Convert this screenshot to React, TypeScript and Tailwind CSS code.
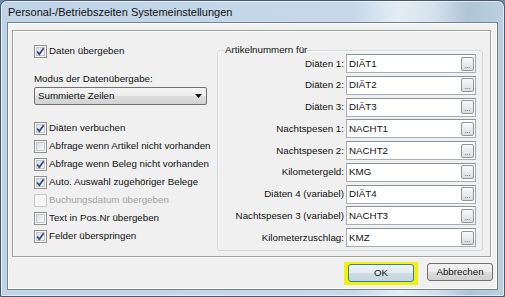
import React from "react";

const leftOptions = [
  { label: "Diäten verbuchen", checked: true },
  { label: "Abfrage wenn Artikel nicht vorhanden", checked: false },
  { label: "Abfrage wenn Beleg nicht vorhanden", checked: true },
  { label: "Auto. Auswahl zugehöriger Belege", checked: true },
  { label: "Buchungsdatum übergeben", checked: false, disabled: true },
  { label: "Text in Pos.Nr übergeben", checked: false },
  { label: "Felder überspringen", checked: true },
];

const articleRows = [
  { label: "Diäten 1:", value: "DIÄT1" },
  { label: "Diäten 2:", value: "DIÄT2" },
  { label: "Diäten 3:", value: "DIÄT3" },
  { label: "Nachtspesen 1:", value: "NACHT1" },
  { label: "Nachtspesen 2:", value: "NACHT2" },
  { label: "Kilometergeld:", value: "KMG" },
  { label: "Diäten 4 (variabel)", value: "DIÄT4" },
  { label: "Nachtspesen 3 (variabel)", value: "NACHT3" },
  { label: "Kilometerzuschlag:", value: "KMZ" },
];

function CheckBox({ checked, disabled }: { checked?: boolean; disabled?: boolean }) {
  return (
    <span
      className={`relative flex h-[13px] w-[13px] shrink-0 items-center justify-center border ${
        disabled ? "border-[#c9c9c9] bg-[#f6f6f6]" : "border-[#8e8f8f] bg-white"
      }`}
    >
      {!disabled && (
        <span className="h-[9px] w-[9px] border border-[#c2c6cc] bg-gradient-to-br from-[#d9dde2] to-[#fbfbfb]" />
      )}
      {checked && (
        <svg className="absolute left-0 top-0" width="11" height="11" viewBox="0 0 11 11">
          <path d="M2.2 5.6 L4.3 8.3 L8.6 2.2" fill="none" stroke="#2a4a8a" strokeWidth="1.7" />
        </svg>
      )}
    </span>
  );
}

function OptionRow({ label, checked, disabled }: { label: string; checked?: boolean; disabled?: boolean }) {
  return (
    <div className="flex h-[18px] items-center">
      <CheckBox checked={checked} disabled={disabled} />
      <span className={`ml-[2px] whitespace-nowrap ${disabled ? "text-[#a3a3a3]" : "text-[#111]"}`}>{label}</span>
    </div>
  );
}

function ArticleField({ label, value }: { label: string; value: string }) {
  return (
    <div className="flex h-[19px] items-center">
      <span className="w-[126px] whitespace-nowrap text-right text-[#111]">{label}</span>
      <div className="ml-[2px] flex h-[19px] w-[130px] items-center border border-[#a7adb5] border-t-[#8a929b] bg-white">
        <span className="flex-1 pl-[2px] text-[#111]">{value}</span>
        <span className="mr-[1px] flex h-[14px] w-[13px] items-end justify-center rounded-[2px] border border-[#8f959b] bg-gradient-to-b from-[#fafafa] to-[#dcdcdc] pb-[1px] text-[7px] leading-[7px] text-[#333]">
          ...
        </span>
      </div>
    </div>
  );
}

export default function App() {
  return (
    <div className="h-[297px] w-[505px] overflow-hidden bg-[#6f8aa3]">
      <div className="flex h-[297px] w-[505px] flex-col rounded-t-[7px] rounded-b-[2px] border border-[#46596d] bg-[linear-gradient(90deg,#c0d4e7_0%,#c6d8e9_70%,#e4edf5_79%,#d4e1ec_86%,#afc4d7_93%,#bcd0e2_100%)] px-[6px] pb-[6px] font-['Liberation_Sans',Arial,sans-serif] text-[9.75px] leading-[12px] shadow-[inset_0_0_0_1px_rgba(255,255,255,0.55)]">
        {/* Title bar */}
        <div className="flex h-[21px] items-center pl-[1px] text-[11px] text-[#111]">
          Personal-/Betriebszeiten Systemeinstellungen
        </div>

        {/* Client area */}
        <div className="flex flex-1 flex-col border border-[#71849a] bg-[#f0f0f0] shadow-[inset_0_0_0_1px_#ffffff]">
          {/* Etched panel */}
          <div className="ml-[4px] mt-[7px] flex h-[227px] w-[479px] border border-[#a0a0a0] shadow-[inset_1px_1px_0_#ffffff,1px_1px_0_#ffffff]">
            {/* Left column */}
            <div className="w-[204px] shrink-0 pl-[21px] pt-[12px]">
              <div className="flex h-[16px] items-center">
                <CheckBox checked />
                <span className="ml-[2px] text-[#111]">Daten übergeben</span>
              </div>
              <div className="mt-[13px] h-[14px] leading-[14px] text-[#111]">Modus der Datenübergabe:</div>
              <div className="mt-[1px] flex h-[18px] w-[173px] items-center rounded-[2px] border border-[#707070] bg-[linear-gradient(180deg,#f4f4f4_0%,#ececec_50%,#dedede_51%,#d2d2d2_100%)] pl-[3px] pr-[4px]">
                <span className="flex-1 text-[#111]">Summierte Zeilen</span>
                <svg width="7" height="4" viewBox="0 0 7 4">
                  <path d="M0 0 H7 L3.5 4 Z" fill="#111" />
                </svg>
              </div>
              <div className="mt-[14px] flex flex-col">
                {leftOptions.map((o) => (
                  <OptionRow key={o.label} label={o.label} checked={o.checked} disabled={o.disabled} />
                ))}
              </div>
            </div>

            {/* Group box */}
            <div className="relative mt-[19px] h-[201px] w-[266px] shrink-0 rounded-[3px] border border-[#d0d8de] shadow-[inset_1px_1px_0_#ffffff]">
              <span className="absolute left-[6px] top-[-7px] bg-[#f0f0f0] px-[1px] leading-[12px] text-[#111]">
                Artikelnummern für
              </span>
              <div className="flex flex-col gap-[2.75px] pt-[3px]">
                {articleRows.map((r) => (
                  <ArticleField key={r.label} label={r.label} value={r.value} />
                ))}
              </div>
            </div>
          </div>

          {/* Buttons */}
          <div className="mt-[5px] flex items-start justify-end gap-[9px] pr-[4px]">
            <div className="bg-[#eef20c] px-[4px] pb-[3px] pt-[2px]">
              <div className="flex h-[18px] w-[66px] items-center justify-center rounded-[3px] border border-[#3c7f9c] bg-[linear-gradient(180deg,#eef5f8_0%,#e2ecf1_50%,#cfdde5_51%,#c4d6df_100%)] text-[#111]">
                OK
              </div>
            </div>
            <div className="mt-[1px] flex h-[18px] w-[66px] items-center justify-center rounded-[3px] border border-[#707070] bg-[linear-gradient(180deg,#f2f2f2_0%,#ebebeb_50%,#dddddd_51%,#cfcfcf_100%)] text-[#111]">
              Abbrechen
            </div>
          </div>
        </div>
      </div>
    </div>
  );
}
